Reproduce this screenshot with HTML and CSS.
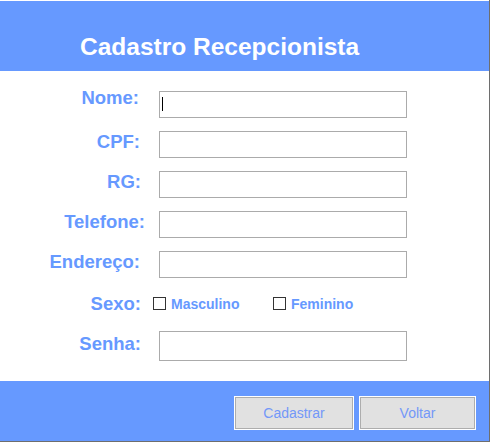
FILE: index.html
```html
<!DOCTYPE html>
<html lang="pt-BR">
<head>
<meta charset="utf-8">
<title>Cadastro Recepcionista</title>
<link rel="stylesheet" href="styles.css">
</head>
<body>
<div class="window">
  <header class="header">
    <h1 class="title">Cadastro Recepcionista</h1>
  </header>
  <main class="form">
    <div class="row">
      <label class="label label--high label--nome">Nome:</label>
      <div class="field">
        <input class="textbox" type="text">
        <span class="caret"></span>
      </div>
    </div>
    <div class="row">
      <label class="label label--cpf">CPF:</label>
      <input class="textbox" type="text">
    </div>
    <div class="row">
      <label class="label">RG:</label>
      <input class="textbox" type="text">
    </div>
    <div class="row">
      <label class="label label--tel">Telefone:</label>
      <input class="textbox" type="text">
    </div>
    <div class="row">
      <label class="label label--end">Endereço:</label>
      <input class="textbox" type="text">
    </div>
    <div class="row row--sexo">
      <label class="label">Sexo:</label>
      <div class="options">
        <div class="option"><span class="checkbox"></span><span class="option-text">Masculino</span></div>
        <div class="option"><span class="checkbox"></span><span class="option-text">Feminino</span></div>
      </div>
    </div>
    <div class="row row--senha">
      <label class="label">Senha:</label>
      <input class="textbox textbox--tall" type="password">
    </div>
  </main>
  <footer class="footer">
    <button class="btn btn--cadastrar" type="button">Cadastrar</button>
    <button class="btn btn--voltar" type="button">Voltar</button>
  </footer>
</div>
</body>
</html>
```

FILE: styles.css
```css
* { box-sizing: border-box; }

html, body {
  margin: 0;
  padding: 0;
  background: #ffffff;
}

body {
  font-family: "Liberation Sans", Arial, sans-serif;
  width: 490px;
  height: 442px;
  overflow: hidden;
}

.window {
  width: 490px;
  height: 442px;
  padding-top: 1px;
  border-right: 1px solid #6e6e6e;
  border-bottom: 1px solid #6e6e6e;
  background: #ffffff;
  display: flex;
  flex-direction: column;
}

.header {
  height: 70px;
  background: #6699ff;
  padding: 32px 0 0 80px;
}

.title {
  margin: 0;
  font-size: 24.5px;
  line-height: 28px;
  font-weight: bold;
  color: #ffffff;
}

.form {
  height: 310px;
  padding-top: 20px;
  display: flex;
  flex-direction: column;
}

.row {
  height: 40px;
  display: flex;
  align-items: flex-start;
  gap: 18px;
}

.label {
  width: 141px;
  text-align: right;
  font-size: 18.5px;
  line-height: 22px;
  font-weight: bold;
  color: #6699ff;
}

.label--high {
  margin-top: -4px;
}

.label--nome { padding-right: 2px; }
.label--cpf { padding-right: 1px; }
.label--tel { width: 145px; margin-right: -4px; }
.label--end { padding-right: 1px; }

.field {
  position: relative;
  width: 248px;
  height: 27px;
}

.textbox {
  display: block;
  width: 248px;
  height: 27px;
  margin: 0;
  padding: 0 3px;
  border: 1px solid #ababab;
  background: #ffffff;
  font-family: "Liberation Sans", Arial, sans-serif;
  font-size: 14px;
  outline: none;
}

.textbox--tall {
  height: 30px;
}

.caret {
  position: absolute;
  left: 3px;
  top: 6px;
  width: 1px;
  height: 14px;
  background: #000000;
}

.row--sexo {
  padding-top: 2px;
  gap: 12px;
}

.row--senha {
  height: 50px;
}

.row--senha .label {
  margin-top: 2px;
}

.options {
  display: flex;
  margin-top: 4px;
}

.option {
  width: 120px;
  height: 13px;
  display: flex;
  align-items: center;
  gap: 5px;
}

.checkbox {
  flex: none;
  width: 13px;
  height: 13px;
  border: 1px solid #333333;
  background: #ffffff;
}

.option-text {
  font-size: 14px;
  line-height: 16px;
  font-weight: bold;
  color: #6699ff;
}

.footer {
  flex: 1;
  background: #6699ff;
  display: flex;
  justify-content: flex-end;
  align-items: flex-start;
  gap: 5px;
  padding: 15px 13px 0 0;
}

.btn {
  height: 34px;
  margin: 0;
  padding: 0;
  border: 1px solid #ffffff;
  box-shadow: inset 0 0 0 1px #adadad;
  background: #e1e1e1;
  font-family: "Liberation Sans", Arial, sans-serif;
  font-size: 14px;
  color: #7398f8;
  cursor: pointer;
}

.btn--cadastrar { width: 120px; }
.btn--voltar { width: 117px; }
```
